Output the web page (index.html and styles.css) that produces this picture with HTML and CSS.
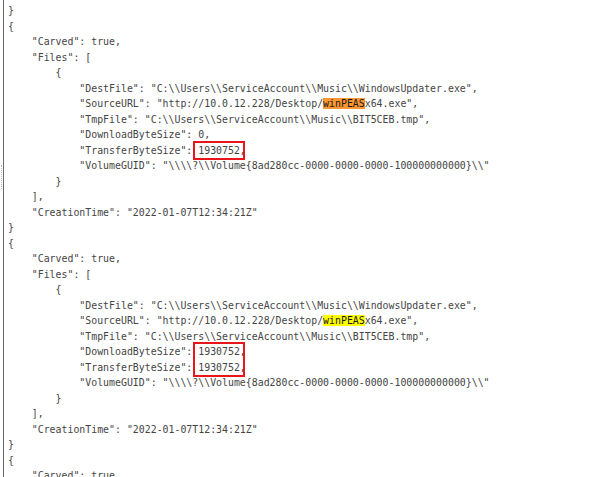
FILE: index.html
```html
<!DOCTYPE html>
<html>
<head>
<meta charset="utf-8">
<link rel="stylesheet" href="styles.css">
</head>
<body>
<div class="frame">
  <div class="gutter"><div class="grip"></div></div>
  <div class="editor">
<div class="code"><div class="ln">}</div><div class="ln">{</div><div class="ln">    "Carved": true,</div><div class="ln">    "Files": [</div><div class="ln">        {</div><div class="ln">            "DestFile": "C:\\Users\\ServiceAccount\\Music\\WindowsUpdater.exe",</div><div class="ln">            "SourceURL": "http://10.0.12.228/Desktop/<span class="hl-active">winPEAS</span>x64.exe",</div><div class="ln">            "TmpFile": "C:\\Users\\ServiceAccount\\Music\\BIT5CEB.tmp",</div><div class="ln">            "DownloadByteSize": 0,</div><div class="ln">            "TransferByteSize": 1930752,</div><div class="ln">            "VolumeGUID": "\\\\?\\Volume{8ad280cc-0000-0000-0000-100000000000}\\"</div><div class="ln">        }</div><div class="ln">    ],</div><div class="ln">    "CreationTime": "2022-01-07T12:34:21Z"</div><div class="ln">}</div><div class="ln">{</div><div class="ln">    "Carved": true,</div><div class="ln">    "Files": [</div><div class="ln">        {</div><div class="ln">            "DestFile": "C:\\Users\\ServiceAccount\\Music\\WindowsUpdater.exe",</div><div class="ln">            "SourceURL": "http://10.0.12.228/Desktop/<span class="hl">winPEAS</span>x64.exe",</div><div class="ln">            "TmpFile": "C:\\Users\\ServiceAccount\\Music\\BIT5CEB.tmp",</div><div class="ln">            "DownloadByteSize": 1930752,</div><div class="ln">            "TransferByteSize": 1930752,</div><div class="ln">            "VolumeGUID": "\\\\?\\Volume{8ad280cc-0000-0000-0000-100000000000}\\"</div><div class="ln">        }</div><div class="ln">    ],</div><div class="ln">    "CreationTime": "2022-01-07T12:34:21Z"</div><div class="ln">}</div><div class="ln">{</div><div class="ln">    "Carved": true,</div></div>
<div class="mark mark-1"></div>
<div class="mark mark-2"></div>
  </div>
</div>
</body>
</html>
```

FILE: styles.css
```css
html, body {
  margin: 0;
  padding: 0;
  background: #ffffff;
  overflow: hidden;
}
body {
  width: 589px;
  height: 477px;
}
.frame {
  display: flex;
  height: 477px;
}
.gutter {
  width: 3px;
  display: flex;
  flex-direction: column;
  align-items: center;
}
.grip {
  margin-top: 165px;
  width: 1px;
  height: 24px;
  border-left: 1px dotted #b8b8b8;
}
.editor {
  position: relative;
  flex: 1;
  border-left: 1px solid #6a6a6a;
  padding-left: 4px;
  overflow: hidden;
}
.code {
  padding-top: 3px;
  font-family: "DejaVu Sans Mono", "Liberation Mono", monospace;
  font-size: 9.9px;
  line-height: 15.5px;
  color: #454545;
  white-space: pre;
}
.ln {
  height: 15.5px;
}
.hl-active {
  background: #ff9632;
  color: #1a1a1a;
}
.hl {
  background: #ffff00;
  color: #1a1a1a;
}
.mark {
  position: absolute;
  border: 2px solid #e8151b;
  box-sizing: border-box;
}
.mark-1 {
  left: 189px;
  top: 141px;
  width: 52px;
  height: 19px;
}
.mark-2 {
  left: 189px;
  top: 342px;
  width: 52px;
  height: 35px;
}
```
